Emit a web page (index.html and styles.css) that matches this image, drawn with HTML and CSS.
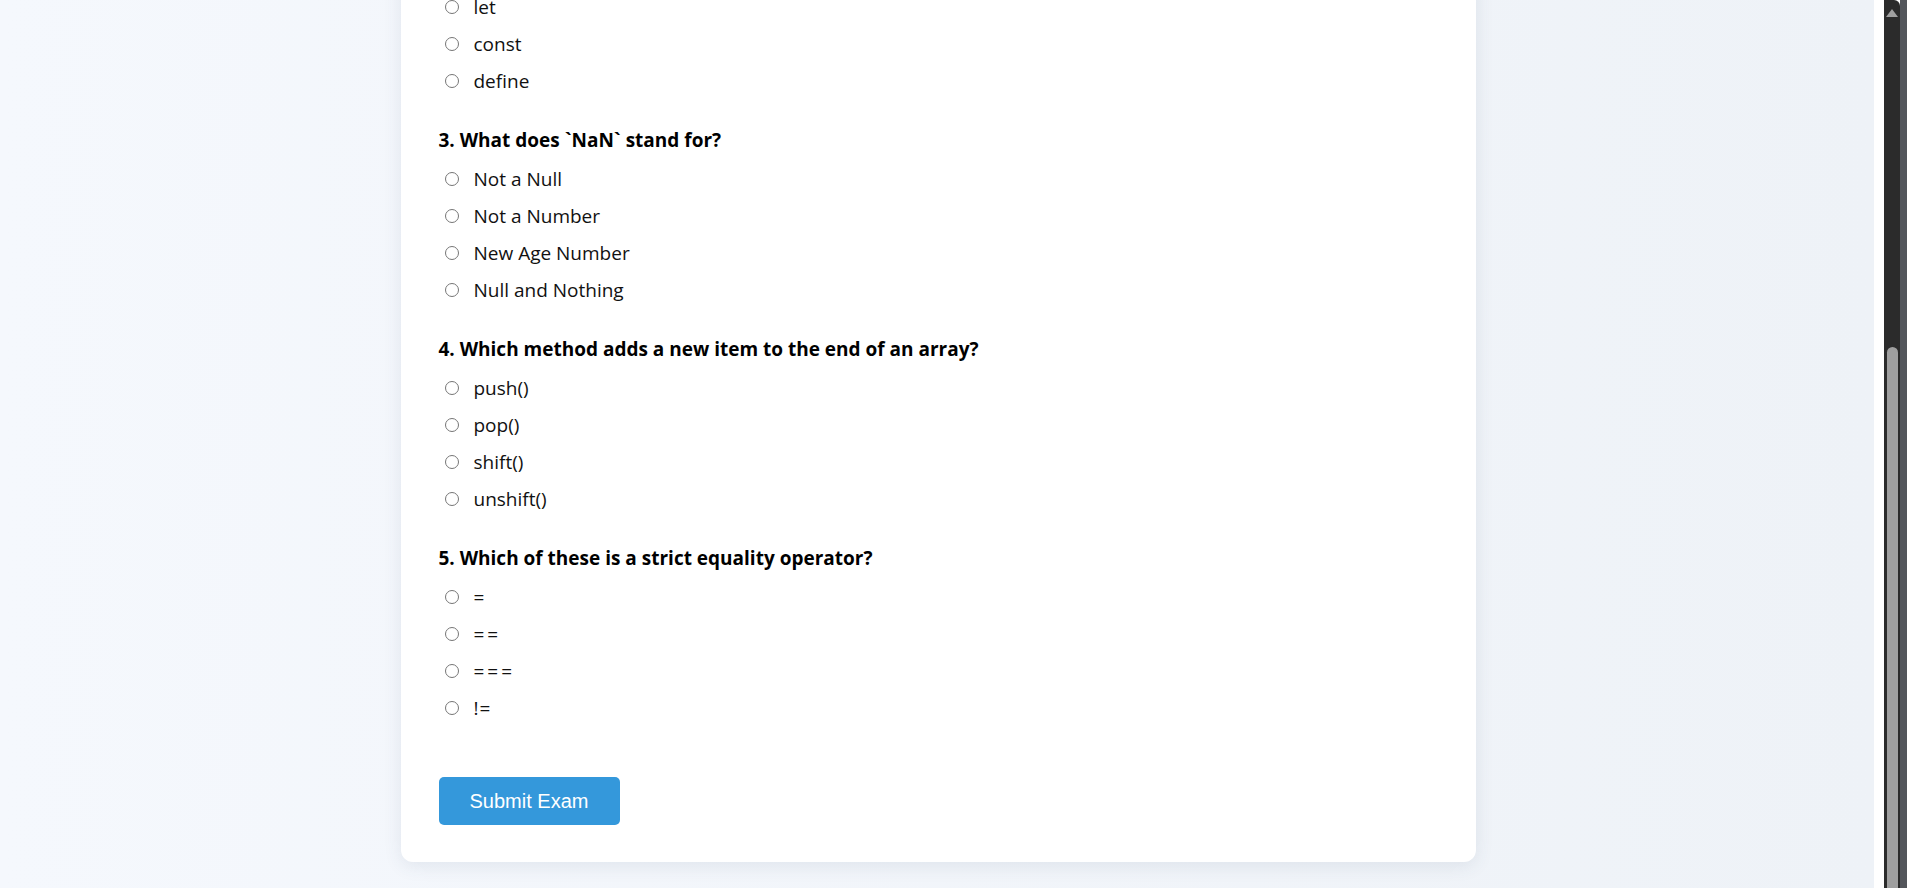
FILE: index.html
```html
<!DOCTYPE html>
<html lang="en">
<head>
<meta charset="utf-8">
<title>JavaScript Exam</title>
<link rel="stylesheet" href="styles.css">
</head>
<body>
<div class="window">
  <main class="viewport">
    <div class="card">
      <h1 class="title">JavaScript Basics Exam</h1>
      <form class="exam">
        <div class="question">
          <h3 class="q-title">1. Which of the following is a JavaScript data type?</h3>
          <label class="option"><input type="radio" name="q1"><span>Boolean</span></label>
          <label class="option"><input type="radio" name="q1"><span>Float</span></label>
          <label class="option"><input type="radio" name="q1"><span>Character</span></label>
          <label class="option"><input type="radio" name="q1"><span>Decimal</span></label>
        </div>
        <div class="question">
          <h3 class="q-title">2. Which keyword is NOT used to declare a variable?</h3>
          <label class="option"><input type="radio" name="q2"><span>var</span></label>
          <label class="option"><input type="radio" name="q2"><span>let</span></label>
          <label class="option"><input type="radio" name="q2"><span>const</span></label>
          <label class="option"><input type="radio" name="q2"><span>define</span></label>
        </div>
        <div class="question">
          <h3 class="q-title">3. What does `NaN` stand for?</h3>
          <label class="option"><input type="radio" name="q3"><span>Not a Null</span></label>
          <label class="option"><input type="radio" name="q3"><span>Not a Number</span></label>
          <label class="option"><input type="radio" name="q3"><span>New Age Number</span></label>
          <label class="option"><input type="radio" name="q3"><span>Null and Nothing</span></label>
        </div>
        <div class="question">
          <h3 class="q-title">4. Which method adds a new item to the end of an array?</h3>
          <label class="option"><input type="radio" name="q4"><span>push()</span></label>
          <label class="option"><input type="radio" name="q4"><span>pop()</span></label>
          <label class="option"><input type="radio" name="q4"><span>shift()</span></label>
          <label class="option"><input type="radio" name="q4"><span>unshift()</span></label>
        </div>
        <div class="question">
          <h3 class="q-title">5. Which of these is a strict equality operator?</h3>
          <label class="option"><input type="radio" name="q5"><span class="op">=</span></label>
          <label class="option"><input type="radio" name="q5"><span class="op">==</span></label>
          <label class="option"><input type="radio" name="q5"><span class="op">===</span></label>
          <label class="option"><input type="radio" name="q5"><span class="op op-tight">!=</span></label>
        </div>
        <button type="button" class="submit">Submit Exam</button>
      </form>
    </div>
  </main>
  <div class="gutter"></div>
  <div class="scrollbar">
    <div class="track">
      <div class="arrow"></div>
      <div class="thumb"></div>
    </div>
    <div class="edge"></div>
  </div>
</div>
</body>
</html>
```

FILE: styles.css
```css
* { box-sizing: border-box; }
html, body { margin: 0; padding: 0; height: 888px; overflow: hidden; }
body { font-family: "Open Sans", "Noto Sans", sans-serif; color: #111; }

.window { display: flex; height: 888px; }

.viewport {
  flex: 1;
  display: flex;
  flex-direction: column;
  justify-content: flex-end;
  overflow: hidden;
  padding-left: 2px;
  background: linear-gradient(90deg, #f5f8fd 0%, #eef2f7 100%);
}

.card {
  flex-shrink: 0;
  width: 1075px;
  margin: 0 auto 26px;
  background: #fff;
  border-radius: 12px;
  box-shadow: 0 4px 18px rgba(60, 80, 110, 0.10);
  padding: 38px 38px 37px;
}

.title { margin: 0 0 30px; font-size: 30px; text-align: center; color: #2c3e50; }

.exam { display: flex; flex-direction: column; }

.question { display: flex; flex-direction: column; margin-bottom: 27px; }
.question:last-of-type { margin-bottom: 0; }

.q-title {
  margin: 0 0 6px;
  font-size: 19px;
  line-height: 28px;
  font-weight: 700;
  color: #000;
}

.option {
  display: flex;
  align-items: center;
  height: 37px;
  font-size: 19px;
  color: #111;
  padding-left: 6px;
}
.option input {
  width: 14px;
  height: 14px;
  margin: 0 15px 0 0;
  flex-shrink: 0;
}
.op { letter-spacing: 3px; }
.op-tight { letter-spacing: 1px; }

.submit {
  align-self: flex-start;
  margin-top: 51px;
  width: 181px;
  height: 48px;
  border: none;
  border-radius: 5px;
  background: #3498db;
  color: #fff;
  font-family: "Liberation Sans", Arial, sans-serif;
  font-size: 20px;
  padding: 0;
}

.gutter { width: 10px; background: #fff; }

.scrollbar { width: 23px; display: flex; }
.track {
  width: 16px;
  background: #2b2b2b;
  border-top-right-radius: 6px;
  display: flex;
  flex-direction: column;
  align-items: center;
  justify-content: space-between;
  padding-top: 9px;
}
.arrow {
  width: 0; height: 0;
  border-left: 6px solid transparent;
  border-right: 6px solid transparent;
  border-bottom: 8px solid #a0a0a0;
}
.thumb {
  width: 11px;
  height: 541px;
  background: #9f9f9f;
  border-radius: 6px 6px 0 0;
}
.edge { width: 7px; background: #53565b; }
```
